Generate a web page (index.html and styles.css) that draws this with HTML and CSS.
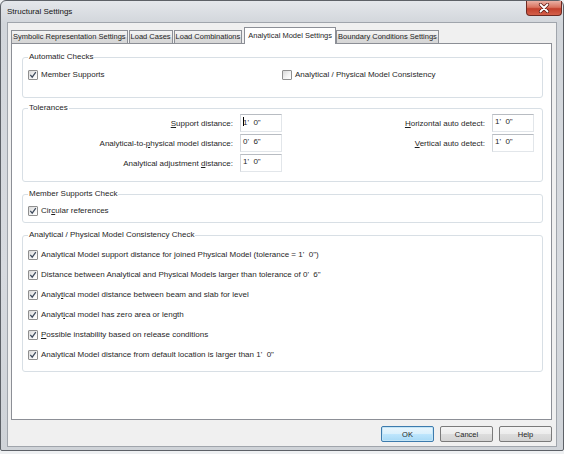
FILE: index.html
```html
<!DOCTYPE html>
<html>
<head>
<meta charset="utf-8">
<title>Structural Settings</title>
<link rel="stylesheet" href="styles.css">
</head>
<body>
<div class="window">
  <div class="titlebar">
    <span class="title">Structural Settings</span>
    <div class="close">
      <svg viewBox="0 0 14 10" width="14" height="10"><path d="M3.5 1.5 L10.5 8.5 M10.5 1.5 L3.5 8.5" stroke="#5a1a14" stroke-width="3.2" stroke-linecap="round"/><path d="M3.5 1.5 L10.5 8.5 M10.5 1.5 L3.5 8.5" stroke="#ffffff" stroke-width="1.8" stroke-linecap="round"/></svg>
    </div>
  </div>
  <div class="client">
    <div class="tabs">
      <div class="tab">Symbolic Representation Settings</div>
      <div class="tab">Load Cases</div>
      <div class="tab">Load Combinations</div>
      <div class="tab active">Analytical Model Settings</div>
      <div class="tab">Boundary Conditions Settings</div>
    </div>
    <div class="panel">
      <fieldset class="group g-auto">
        <legend>Automatic Checks</legend>
        <div class="auto-row">
          <label class="check"><span class="cb on"><svg viewBox="0 0 8 8" width="8" height="8"><path d="M1.3 3.8 L3.2 6.2 L6.8 1.2" stroke="#3d4a5c" stroke-width="1.2" fill="none"/></svg></span>Member Supports</label>
          <label class="check"><span class="cb"></span>Analytical / Physical Model Consistency</label>
        </div>
      </fieldset>

      <fieldset class="group g-tol">
        <legend>Tolerances</legend>
        <div class="tol">
          <span class="lbl"><u>S</u>upport distance:</span>
          <span class="field"><span class="caret"></span>1'&nbsp; 0"</span>
          <span class="lbl"><u>H</u>orizontal auto detect:</span>
          <span class="field">1'&nbsp; 0"</span>

          <span class="lbl">Analytical-to-<u>p</u>hysical model distance:</span>
          <span class="field">0'&nbsp; 6"</span>
          <span class="lbl"><u>V</u>ertical auto detect:</span>
          <span class="field">1'&nbsp; 0"</span>

          <span class="lbl">Analytical adjustment <u>d</u>istance:</span>
          <span class="field">1'&nbsp; 0"</span>
        </div>
      </fieldset>

      <fieldset class="group g-member">
        <legend>Member Supports Check</legend>
        <label class="check"><span class="cb on"><svg viewBox="0 0 8 8" width="8" height="8"><path d="M1.3 3.8 L3.2 6.2 L6.8 1.2" stroke="#3d4a5c" stroke-width="1.2" fill="none"/></svg></span>Cir<u>c</u>ular references</label>
      </fieldset>

      <fieldset class="group g-cons">
        <legend>Analytical / Physical Model Consistency Check</legend>
        <div class="list">
          <label class="check"><span class="cb on"><svg viewBox="0 0 8 8" width="8" height="8"><path d="M1.3 3.8 L3.2 6.2 L6.8 1.2" stroke="#3d4a5c" stroke-width="1.2" fill="none"/></svg></span>Analytical Model support distance for&nbsp;<u>j</u>oined Physical Model (tolerance = 1'&nbsp; 0")</label>
          <label class="check"><span class="cb on"><svg viewBox="0 0 8 8" width="8" height="8"><path d="M1.3 3.8 L3.2 6.2 L6.8 1.2" stroke="#3d4a5c" stroke-width="1.2" fill="none"/></svg></span>Distance between Analytical and Physical Models larger than tolerance of 0'&nbsp; 6"</label>
          <label class="check"><span class="cb on"><svg viewBox="0 0 8 8" width="8" height="8"><path d="M1.3 3.8 L3.2 6.2 L6.8 1.2" stroke="#3d4a5c" stroke-width="1.2" fill="none"/></svg></span>Analy<u>t</u>ical model distance between beam and slab for level</label>
          <label class="check"><span class="cb on"><svg viewBox="0 0 8 8" width="8" height="8"><path d="M1.3 3.8 L3.2 6.2 L6.8 1.2" stroke="#3d4a5c" stroke-width="1.2" fill="none"/></svg></span>Analyt<u>i</u>cal model has zero area or length</label>
          <label class="check"><span class="cb on"><svg viewBox="0 0 8 8" width="8" height="8"><path d="M1.3 3.8 L3.2 6.2 L6.8 1.2" stroke="#3d4a5c" stroke-width="1.2" fill="none"/></svg></span><u>P</u>ossible instability based on release conditions</label>
          <label class="check"><span class="cb on"><svg viewBox="0 0 8 8" width="8" height="8"><path d="M1.3 3.8 L3.2 6.2 L6.8 1.2" stroke="#3d4a5c" stroke-width="1.2" fill="none"/></svg></span>Analytical Model distance from default location is larger than 1'&nbsp; 0"</label>
        </div>
      </fieldset>
    </div>
    <div class="buttons">
      <button class="btn default">OK</button>
      <button class="btn">Cancel</button>
      <button class="btn">Help</button>
    </div>
  </div>
</div>
</body>
</html>
```

FILE: styles.css
```css
* { box-sizing: border-box; }
html, body { margin: 0; padding: 0; }
body {
  width: 564px;
  height: 454px;
  overflow: hidden;
  background: #eef0f2;
  font-family: "Liberation Sans", Arial, sans-serif;
  font-size: 8px;
  color: #1f1f1f;
}
u { text-decoration: underline; text-underline-offset: 1px; }

.window {
  width: 564px;
  height: 451px;
  display: flex;
  flex-direction: column;
  border: 1px solid #5d6167;
  border-radius: 6px 6px 2px 2px;
  background: linear-gradient(to bottom, #e4e7eb 0px, #d2d6db 22px, #d7dadf 60%, #cfd3d8 100%);
  padding: 0 6px 3px 6px;
}

.titlebar {
  height: 21px;
  display: flex;
  justify-content: space-between;
  align-items: flex-start;
  margin-right: -5px;
}
.title {
  margin-top: 6px;
  font-size: 8px;
  color: #141414;
}
.close {
  width: 36px;
  height: 15px;
  border: 1px solid #6e2a22;
  border-top: none;
  border-radius: 0 0 4px 4px;
  background: linear-gradient(to bottom, #eab0a4 0%, #d9735f 45%, #c2402c 55%, #d4604a 100%);
  display: flex;
  align-items: center;
  justify-content: center;
}

.client {
  flex: 1;
  display: flex;
  flex-direction: column;
  border: 1px solid #a0a5ac;
  background: #f0f0f0;
  padding: 4px 4px 4px 3px;
}

.tabs {
  display: flex;
  align-items: flex-end;
  height: 17px;
  margin-bottom: -1px;
  position: relative;
  z-index: 1;
}
.tab {
  height: 13px;
  margin-bottom: 1px;
  margin-right: 1px;
  padding: 0 1px;
  font-size: 7.5px;
  line-height: 12px;
  border: 1px solid #8c8f96;
  border-bottom: none;
  background: linear-gradient(to bottom, #f4f4f4, #e9e9e9 50%, #dcdcdc 51%, #d6d6d6);
  white-space: nowrap;
}
.tab.active {
  height: 17px;
  margin: 0 0 0 1px;
  padding: 0 3px;
  line-height: 15px;
  background: #ffffff;
}

.panel {
  flex: 1;
  background: #ffffff;
  border: 1px solid #8c8f96;
  padding: 8px 8px 0 10px;
}

.group {
  margin: 0 0 7px 0;
  border: 1px solid #d8dfe5;
  border-radius: 3px;
  padding: 0 8px 0 5px;
  min-width: 0;
}
.group legend {
  padding: 0 1px;
  line-height: 10px;
  color: #262626;
}
.g-auto { padding-top: 7px; padding-bottom: 16px; margin-bottom: 5px; }
.g-tol { padding-top: 1px; padding-bottom: 9px; }
.g-member { padding-top: 6px; padding-bottom: 5px; }
.g-cons { padding-top: 9px; padding-bottom: 10px; }

.check {
  display: flex;
  align-items: center;
  height: 12px;
  line-height: 12px;
  white-space: nowrap;
}
.cb {
  width: 10px;
  height: 10px;
  margin-right: 3px;
  flex: none;
  border: 1px solid #8f8f8f;
  border-radius: 1px;
  background: linear-gradient(135deg, #d8d8d8, #f4f4f4 60%, #ffffff);
  display: flex;
  align-items: center;
  justify-content: center;
}

.auto-row {
  display: grid;
  grid-template-columns: 254px 1fr;
}

.tol {
  display: grid;
  grid-template-columns: 205px 42px 1fr 42px;
  column-gap: 7px;
  row-gap: 2px;
  align-items: center;
}
.lbl {
  text-align: right;
  white-space: nowrap;
}
.field {
  height: 18px;
  border: 1px solid #e2e6ea;
  border-top-color: #b8bcc2;
  border-left-color: #d2d6db;
  padding: 2px 0 0 2px;
  line-height: 10px;
  background: #ffffff;
  white-space: nowrap;
}
.caret {
  display: inline-block;
  width: 1px;
  height: 9px;
  margin-right: -1px;
  vertical-align: -1px;
  background: #000;
}

.list {
  display: flex;
  flex-direction: column;
  gap: 8px;
}

.buttons {
  display: flex;
  justify-content: flex-end;
  gap: 6px;
  margin-top: 6px;
}
.btn {
  width: 53px;
  height: 16px;
  padding: 0;
  font-family: "Liberation Sans", Arial, sans-serif;
  font-size: 7.5px;
  color: #1f1f1f;
  border: 1px solid #7a7a7a;
  border-radius: 2px;
  background: linear-gradient(to bottom, #f4f4f4, #ececec 50%, #dddddd 51%, #d3d3d3);
}
.btn.default {
  border-color: #3d7bad;
  background: linear-gradient(to bottom, #eaf6fd, #d9f0fc 50%, #bee6fd 51%, #a7d9f5);
  box-shadow: inset 0 0 0 1px #c4e5f6;
}
```
